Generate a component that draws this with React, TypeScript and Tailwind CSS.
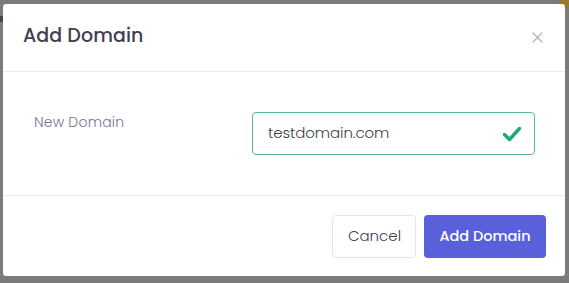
import React from "react";

export default function App() {
  return (
    <div className="w-[569px] h-[283px] bg-[#7b7b7b] overflow-hidden relative" style={{ fontFamily: "Poppins, 'Open Sans', 'Noto Sans', sans-serif" }}>
      <div className="absolute right-0 top-0 w-[9px] h-[8px] bg-[#9a7a2a]" />
      <div className="absolute left-0 top-[16px] w-[3px] h-[6px] bg-[#3b4a5a]" />
      <div className="ml-[3px] mt-[4px] w-[562px] h-[272px] bg-white rounded-[3px] flex flex-col relative">
        <div className="h-[68px] flex items-center justify-between pl-[20px] pr-[23px] border-b border-[#e9ecef] shrink-0">
          <h2 className="text-[19px] font-medium text-[#3f3f4f] tracking-[0.1px] mt-[-3px]">Add Domain</h2>
          <svg width="11" height="11" viewBox="0 0 11 11" className="mr-[-1px]">
            <path d="M1 1L10 10M10 1L1 10" stroke="#b5b5b5" strokeWidth="1.3" strokeLinecap="round" />
          </svg>
        </div>
        <div className="h-[124px] flex items-start pl-[31px] pr-[30px] pt-[40px] border-b border-[#e9ecef] shrink-0">
          <label className="w-[218px] text-[14px] font-light text-[#6f7892] mt-[0px] tracking-[0.2px]">New Domain</label>
          <div className="flex-1 h-[43px] border border-[#5ab69b] rounded-[4px] flex items-center justify-between pl-[15px] pr-[12px]">
            <span className="text-[15px] font-light text-[#3f3f48] tracking-[-0.1px]">testdomain.com</span>
            <svg width="20" height="18" viewBox="0 0 20 18">
              <path d="M2.5 9.5L7.5 14.5L17.5 3.5" fill="none" stroke="#1fa67a" strokeWidth="3.4" strokeLinecap="round" strokeLinejoin="round" />
            </svg>
          </div>
        </div>
        <div className="flex-1 flex items-start justify-end gap-[8px] pr-[19px] pt-[19px]">
          <button className="h-[43px] w-[84px] border border-[#e2e4e8] rounded-[4px] bg-white text-[15px] font-light text-[#3f3f4f] pl-[1px]">Cancel</button>
          <button className="h-[43px] w-[122px] rounded-[4px] bg-[#5a60d9] text-[14.5px] font-medium text-white">Add Domain</button>
        </div>
      </div>
    </div>
  );
}
